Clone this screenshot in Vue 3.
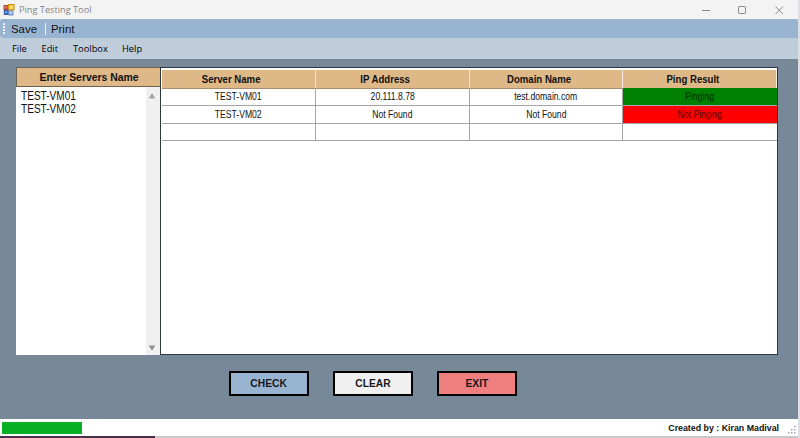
<script setup>
const menus = ['File', 'Edit', 'Toolbox', 'Help']
const columns = ['Server Name', 'IP Address', 'Domain Name', 'Ping Result']
const rows = [
  { name: 'TEST-VM01', ip: '20.111.8.78', domain: 'test.domain.com', result: 'Pinging', state: 'ok' },
  { name: 'TEST-VM02', ip: 'Not Found', domain: 'Not Found', result: 'Not Pinging', state: 'bad' },
  { name: '', ip: '', domain: '', result: '', state: '' },
]
</script>

<template>
  <div class="screen">
    <div class="window">
      <header class="titlebar">
        <svg class="app-icon" width="12" height="12" viewBox="0 0 12 12">
          <rect x="0.5" y="1" width="4.6" height="5" fill="#a8453c" />
          <rect x="1.3" y="1.9" width="2.8" height="2.8" fill="#d9705a" />
          <rect x="4.8" y="0" width="6.7" height="6.5" fill="#d08c14" />
          <rect x="6.2" y="1.2" width="4.1" height="4.1" fill="#ffe25c" />
          <rect x="0.8" y="6" width="4.8" height="5" fill="#3658b0" />
          <rect x="1.8" y="6.9" width="2.6" height="2.6" fill="#6f96e0" />
          <rect x="5.4" y="6.5" width="4.9" height="4.9" fill="#5577bd" />
          <rect x="6.2" y="7.2" width="3.2" height="3.2" fill="#b4cff2" />
        </svg>
        <span class="title">Ping Testing Tool</span>
        <svg class="controls" width="84" height="12" viewBox="0 0 84 12" fill="none" stroke="#8a8a8a">
          <path d="M1 6.5h8" />
          <rect x="37.5" y="2.5" width="7" height="7" rx="0.6" />
          <path d="M74.5 2.5l7.5 7.5M82 2.5l-7.5 7.5" />
        </svg>
      </header>

      <div class="toolbar">
        <span class="grip"></span>
        <span class="tool">Save</span>
        <span class="divider"></span>
        <span class="tool">Print</span>
      </div>

      <nav class="menubar">
        <span v-for="m in menus" :key="m" :class="['menu', m.toLowerCase()]">{{ m }}</span>
      </nav>

      <main class="content">
        <div class="panels">
          <section class="servers">
            <h2 class="servers-head"><span>Enter Servers Name</span></h2>
            <div class="servers-body">
              <div class="names">
                <div>TEST-VM01</div>
                <div>TEST-VM02</div>
              </div>
              <div class="scroll">
                <svg width="8" height="6" viewBox="0 0 8 6"><path d="M4 0.3L7.3 5.5H0.7z" fill="#a3a3a3" /></svg>
                <svg width="8" height="6" viewBox="0 0 8 6"><path d="M4 5.7L7.3 0.5H0.7z" fill="#8f8f8f" /></svg>
              </div>
            </div>
          </section>

          <section class="grid">
            <div class="row head">
              <div v-for="c in columns" :key="c" class="cell"><span>{{ c }}</span></div>
            </div>
            <div v-for="(r, i) in rows" :key="i" class="row">
              <div class="cell"><span>{{ r.name }}</span></div>
              <div class="cell"><span>{{ r.ip }}</span></div>
              <div class="cell"><span>{{ r.domain }}</span></div>
              <div :class="['cell', 'result', r.state]"><span>{{ r.result }}</span></div>
            </div>
          </section>
        </div>

        <div class="actions">
          <button class="check"><span>CHECK</span></button>
          <button class="clear"><span>CLEAR</span></button>
          <button class="exit"><span>EXIT</span></button>
        </div>
      </main>

      <footer class="status">
        <div class="progress"></div>
        <span class="credit">Created by : Kiran Madival</span>
        <svg class="resize" width="10" height="10" viewBox="0 0 10 10" fill="#a5a5a5">
          <path d="M7 1h1.5v1.5H7zM4 4h1.5v1.5H4zM7 4h1.5v1.5H7zM1 7h1.5v1.5H1zM4 7h1.5v1.5H4zM7 7h1.5v1.5H7z" />
        </svg>
      </footer>
      <div class="under"><span></span></div>
    </div>
  </div>
</template>

<style>
body {
  overflow: hidden;
}
</style>

<style scoped>
.screen {
  width: 800px;
  height: 438px;
  background: #dcdfe3;
  font-family: "Liberation Sans", Arial, sans-serif;
  color: #111;
}
.screen * {
  box-sizing: border-box;
}
.window {
  width: 798px;
  height: 438px;
  display: flex;
  flex-direction: column;
}
.titlebar {
  height: 19px;
  flex: none;
  background: #f3f3f3;
  display: flex;
  align-items: center;
  padding: 0 13px 0 3px;
}
.title {
  margin-left: 4px;
  font: 9.2px/18px "Open Sans", sans-serif;
  color: #858585;
}
.controls {
  margin-left: auto;
}
.toolbar {
  height: 19px;
  flex: none;
  background: #99b4d1;
  border-radius: 3px 0 0 3px;
  display: flex;
  align-items: center;
  font-size: 11.4px;
  padding-left: 3px;
}
.grip {
  width: 2px;
  height: 12px;
  background: repeating-linear-gradient(#eef3f9 0 2px, transparent 2px 3px);
}
.tool {
  margin-left: 6px;
  padding-top: 2px;
  line-height: 17px;
}
.divider {
  width: 1px;
  height: 12px;
  background: #e9f0f7;
  margin-left: 8px;
}
.divider + .tool {
  margin-left: 5px;
}
.menubar {
  height: 21px;
  flex: none;
  background: #bfcddb;
  display: flex;
  font: 9.3px/21px "Open Sans", sans-serif;
  color: #000;
  padding-left: 12px;
}
.menu {
  flex: none;
}
.file {
  width: 29.5px;
}
.edit {
  width: 31.5px;
}
.toolbox {
  width: 49px;
}
.content {
  height: 360px;
  flex: none;
  background: #778899;
  padding: 8px 20px 0 16px;
}
.panels {
  display: flex;
  height: 288px;
}
.servers {
  width: 144px;
  display: flex;
  flex-direction: column;
}
.servers-head {
  margin: 0;
  height: 20px;
  background: #deb887;
  border: 1px solid #6f6250;
  border-right: 0;
  font-size: 11.4px;
  font-weight: bold;
  line-height: 19px;
  text-align: center;
  white-space: nowrap;
  padding-left: 1px;
}
.servers-head span {
  display: inline-block;
  transform: scaleX(0.915);
}
.servers-body {
  flex: 1;
  background: #fff;
  display: flex;
  justify-content: space-between;
}
.names {
  padding: 3px 0 0 5px;
  font-size: 12px;
  line-height: 13px;
  transform: scaleX(0.84);
  transform-origin: 5px 0;
}
.scroll {
  width: 14px;
  background: #f0f0f0;
  display: flex;
  flex-direction: column;
  justify-content: space-between;
  align-items: center;
  padding: 6px 2px 4px 0;
}
.grid {
  width: 618px;
  border: 1px solid #30383f;
  background: #fff;
  padding: 1px 0 0 1px;
}
.row {
  display: grid;
  grid-template-columns: 154px 154px 153px 154px;
  height: 17.67px;
  font-size: 10px;
}
.cell {
  border-right: 1px solid #a5a5a5;
  border-bottom: 1px solid #a5a5a5;
  line-height: 17px;
  text-align: center;
  white-space: nowrap;
}
.cell span {
  display: inline-block;
  transform: scaleX(0.86);
}
.cell.result {
  border-right-width: 0;
}
.row.head {
  height: 19px;
  font-size: 10.5px;
  font-weight: bold;
}
.head .cell {
  background: #deb887;
  border-top: 1px solid #fff;
  border-right: 1px solid #f5eadb;
  border-bottom-color: #a58f70;
  line-height: 18px;
  padding-right: 14px;
}
.head .cell span {
  transform: scaleX(0.915);
}
.ok {
  background: #008000;
  color: #022f02;
}
.bad {
  background: #ff0000;
  color: #5a0000;
}
.actions {
  display: flex;
  gap: 24px;
  padding: 16px 0 0 213px;
}
.actions button {
  width: 80px;
  height: 25px;
  border: 2px solid #000;
  border-radius: 0;
  padding: 0 0 1px;
  font: bold 11.6px/20px "Liberation Sans", Arial, sans-serif;
  color: #15181c;
}
.actions button span {
  display: inline-block;
  transform: scaleX(0.885);
}
.actions .check {
  background: #99b4d1;
}
.actions .clear {
  background: #f0f0f0;
}
.actions .exit {
  background: #f08080;
}
.status {
  height: 17px;
  flex: none;
  background: #fff;
  display: flex;
  align-items: center;
  padding-left: 2px;
}
.progress {
  width: 80px;
  height: 12px;
  background: #06b025;
}
.credit {
  margin-left: auto;
  font-size: 9px;
  font-weight: bold;
  line-height: 16px;
  transform: scaleX(0.98);
  transform-origin: right;
}
.resize {
  margin: 5px 1px 0 8px;
}
.under {
  height: 2px;
  flex: none;
  background: #c9c9c9;
}
.under span {
  display: block;
  width: 155px;
  height: 2px;
  background: #4a3048;
}
</style>
